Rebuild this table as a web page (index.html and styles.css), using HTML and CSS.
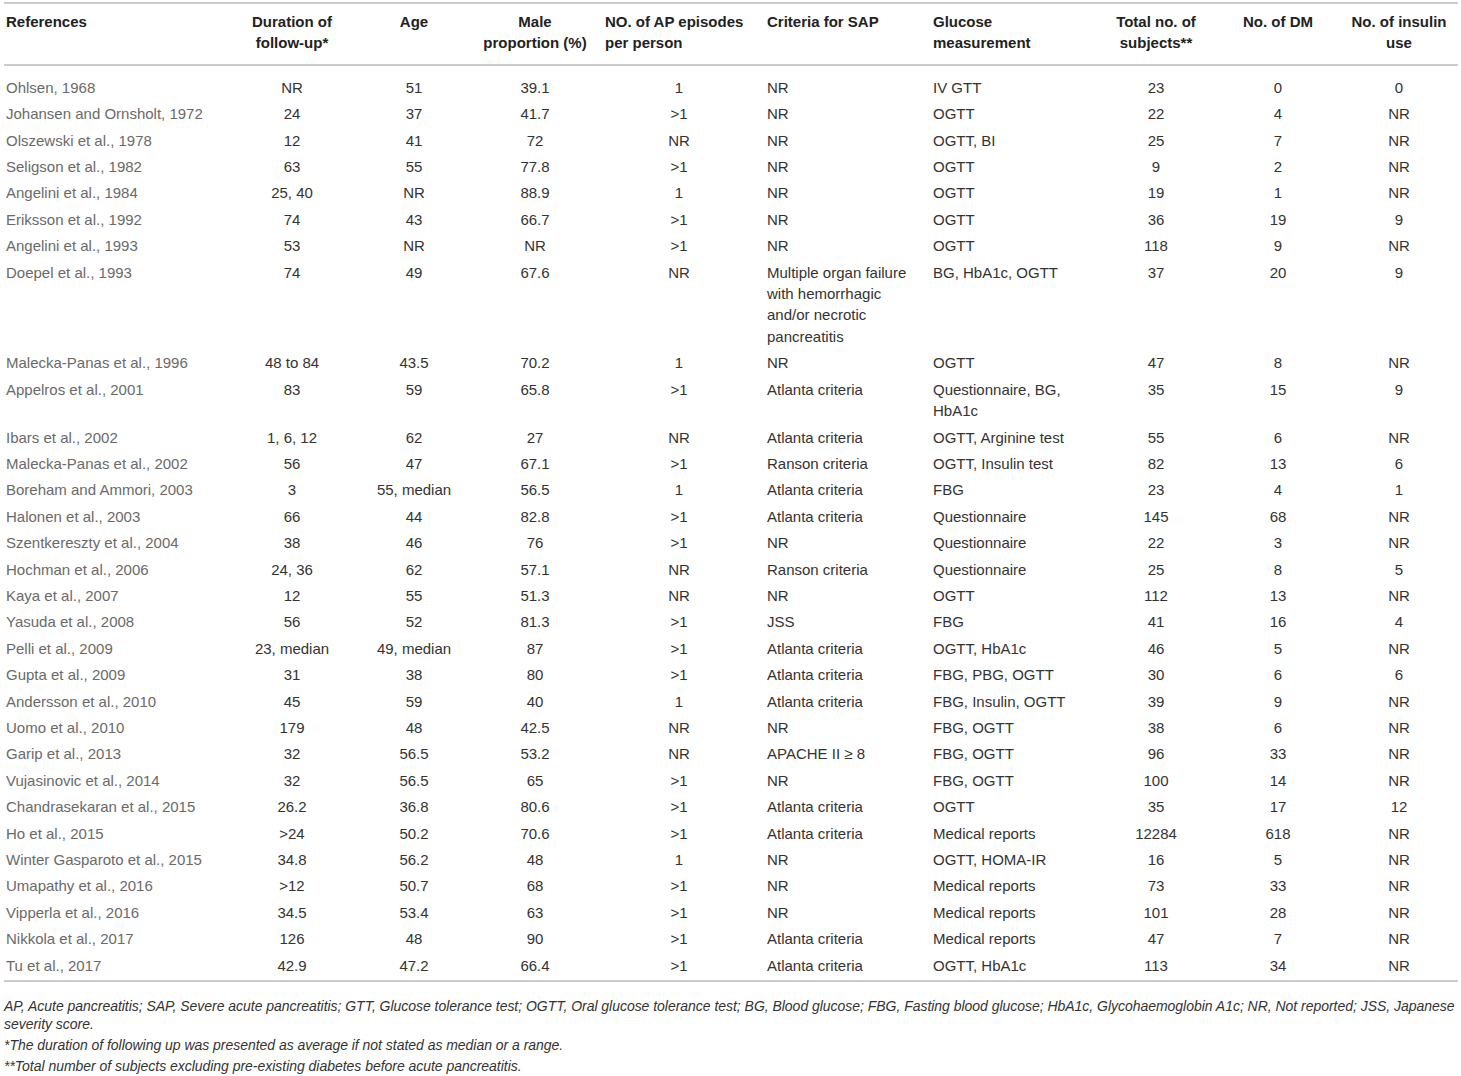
FILE: index.html
```html
<!DOCTYPE html>
<html lang="en">
<head>
    <meta charset="UTF-8">
    <title>Acute pancreatitis and diabetes - included studies</title>
    <link rel="stylesheet" href="styles.css">
</head>
<body>
    <table class="studies">
        <colgroup>
            <col class="c-ref">
            <col class="c-dur">
            <col class="c-age">
            <col class="c-male">
            <col class="c-ap">
            <col class="c-crit">
            <col class="c-gluc">
            <col class="c-total">
            <col class="c-dm">
            <col class="c-ins">
        </colgroup>
        <thead>
            <tr>
                <th class="left ref">References</th>
                <th>Duration of<br>follow-up*</th>
                <th>Age</th>
                <th>Male<br>proportion (%)</th>
                <th class="left">NO. of AP episodes<br>per person</th>
                <th class="left">Criteria for SAP</th>
                <th class="left">Glucose<br>measurement</th>
                <th>Total no. of<br>subjects**</th>
                <th>No. of DM</th>
                <th>No. of insulin<br>use</th>
            </tr>
        </thead>
        <tbody>
            <tr><td class="ref">Ohlsen, 1968</td><td>NR</td><td>51</td><td>39.1</td><td>1</td><td class="left">NR</td><td class="left">IV GTT</td><td>23</td><td>0</td><td>0</td></tr>
            <tr><td class="ref">Johansen and Ornsholt, 1972</td><td>24</td><td>37</td><td>41.7</td><td>&gt;1</td><td class="left">NR</td><td class="left">OGTT</td><td>22</td><td>4</td><td>NR</td></tr>
            <tr><td class="ref">Olszewski et al., 1978</td><td>12</td><td>41</td><td>72</td><td>NR</td><td class="left">NR</td><td class="left">OGTT, BI</td><td>25</td><td>7</td><td>NR</td></tr>
            <tr><td class="ref">Seligson et al., 1982</td><td>63</td><td>55</td><td>77.8</td><td>&gt;1</td><td class="left">NR</td><td class="left">OGTT</td><td>9</td><td>2</td><td>NR</td></tr>
            <tr><td class="ref">Angelini et al., 1984</td><td>25, 40</td><td>NR</td><td>88.9</td><td>1</td><td class="left">NR</td><td class="left">OGTT</td><td>19</td><td>1</td><td>NR</td></tr>
            <tr><td class="ref">Eriksson et al., 1992</td><td>74</td><td>43</td><td>66.7</td><td>&gt;1</td><td class="left">NR</td><td class="left">OGTT</td><td>36</td><td>19</td><td>9</td></tr>
            <tr><td class="ref">Angelini et al., 1993</td><td>53</td><td>NR</td><td>NR</td><td>&gt;1</td><td class="left">NR</td><td class="left">OGTT</td><td>118</td><td>9</td><td>NR</td></tr>
            <tr><td class="ref">Doepel et al., 1993</td><td>74</td><td>49</td><td>67.6</td><td>NR</td><td class="left">Multiple organ failure<br>with hemorrhagic<br>and/or necrotic<br>pancreatitis</td><td class="left">BG, HbA1c, OGTT</td><td>37</td><td>20</td><td>9</td></tr>
            <tr><td class="ref">Malecka-Panas et al., 1996</td><td>48 to 84</td><td>43.5</td><td>70.2</td><td>1</td><td class="left">NR</td><td class="left">OGTT</td><td>47</td><td>8</td><td>NR</td></tr>
            <tr><td class="ref">Appelros et al., 2001</td><td>83</td><td>59</td><td>65.8</td><td>&gt;1</td><td class="left">Atlanta criteria</td><td class="left">Questionnaire, BG,<br>HbA1c</td><td>35</td><td>15</td><td>9</td></tr>
            <tr><td class="ref">Ibars et al., 2002</td><td>1, 6, 12</td><td>62</td><td>27</td><td>NR</td><td class="left">Atlanta criteria</td><td class="left">OGTT, Arginine test</td><td>55</td><td>6</td><td>NR</td></tr>
            <tr><td class="ref">Malecka-Panas et al., 2002</td><td>56</td><td>47</td><td>67.1</td><td>&gt;1</td><td class="left">Ranson criteria</td><td class="left">OGTT, Insulin test</td><td>82</td><td>13</td><td>6</td></tr>
            <tr><td class="ref">Boreham and Ammori, 2003</td><td>3</td><td>55, median</td><td>56.5</td><td>1</td><td class="left">Atlanta criteria</td><td class="left">FBG</td><td>23</td><td>4</td><td>1</td></tr>
            <tr><td class="ref">Halonen et al., 2003</td><td>66</td><td>44</td><td>82.8</td><td>&gt;1</td><td class="left">Atlanta criteria</td><td class="left">Questionnaire</td><td>145</td><td>68</td><td>NR</td></tr>
            <tr><td class="ref">Szentkereszty et al., 2004</td><td>38</td><td>46</td><td>76</td><td>&gt;1</td><td class="left">NR</td><td class="left">Questionnaire</td><td>22</td><td>3</td><td>NR</td></tr>
            <tr><td class="ref">Hochman et al., 2006</td><td>24, 36</td><td>62</td><td>57.1</td><td>NR</td><td class="left">Ranson criteria</td><td class="left">Questionnaire</td><td>25</td><td>8</td><td>5</td></tr>
            <tr><td class="ref">Kaya et al., 2007</td><td>12</td><td>55</td><td>51.3</td><td>NR</td><td class="left">NR</td><td class="left">OGTT</td><td>112</td><td>13</td><td>NR</td></tr>
            <tr><td class="ref">Yasuda et al., 2008</td><td>56</td><td>52</td><td>81.3</td><td>&gt;1</td><td class="left">JSS</td><td class="left">FBG</td><td>41</td><td>16</td><td>4</td></tr>
            <tr><td class="ref">Pelli et al., 2009</td><td>23, median</td><td>49, median</td><td>87</td><td>&gt;1</td><td class="left">Atlanta criteria</td><td class="left">OGTT, HbA1c</td><td>46</td><td>5</td><td>NR</td></tr>
            <tr><td class="ref">Gupta et al., 2009</td><td>31</td><td>38</td><td>80</td><td>&gt;1</td><td class="left">Atlanta criteria</td><td class="left">FBG, PBG, OGTT</td><td>30</td><td>6</td><td>6</td></tr>
            <tr><td class="ref">Andersson et al., 2010</td><td>45</td><td>59</td><td>40</td><td>1</td><td class="left">Atlanta criteria</td><td class="left">FBG, Insulin, OGTT</td><td>39</td><td>9</td><td>NR</td></tr>
            <tr><td class="ref">Uomo et al., 2010</td><td>179</td><td>48</td><td>42.5</td><td>NR</td><td class="left">NR</td><td class="left">FBG, OGTT</td><td>38</td><td>6</td><td>NR</td></tr>
            <tr><td class="ref">Garip et al., 2013</td><td>32</td><td>56.5</td><td>53.2</td><td>NR</td><td class="left">APACHE II &ge; 8</td><td class="left">FBG, OGTT</td><td>96</td><td>33</td><td>NR</td></tr>
            <tr><td class="ref">Vujasinovic et al., 2014</td><td>32</td><td>56.5</td><td>65</td><td>&gt;1</td><td class="left">NR</td><td class="left">FBG, OGTT</td><td>100</td><td>14</td><td>NR</td></tr>
            <tr><td class="ref">Chandrasekaran et al., 2015</td><td>26.2</td><td>36.8</td><td>80.6</td><td>&gt;1</td><td class="left">Atlanta criteria</td><td class="left">OGTT</td><td>35</td><td>17</td><td>12</td></tr>
            <tr><td class="ref">Ho et al., 2015</td><td>&gt;24</td><td>50.2</td><td>70.6</td><td>&gt;1</td><td class="left">Atlanta criteria</td><td class="left">Medical reports</td><td>12284</td><td>618</td><td>NR</td></tr>
            <tr><td class="ref">Winter Gasparoto et al., 2015</td><td>34.8</td><td>56.2</td><td>48</td><td>1</td><td class="left">NR</td><td class="left">OGTT, HOMA-IR</td><td>16</td><td>5</td><td>NR</td></tr>
            <tr><td class="ref">Umapathy et al., 2016</td><td>&gt;12</td><td>50.7</td><td>68</td><td>&gt;1</td><td class="left">NR</td><td class="left">Medical reports</td><td>73</td><td>33</td><td>NR</td></tr>
            <tr><td class="ref">Vipperla et al., 2016</td><td>34.5</td><td>53.4</td><td>63</td><td>&gt;1</td><td class="left">NR</td><td class="left">Medical reports</td><td>101</td><td>28</td><td>NR</td></tr>
            <tr><td class="ref">Nikkola et al., 2017</td><td>126</td><td>48</td><td>90</td><td>&gt;1</td><td class="left">Atlanta criteria</td><td class="left">Medical reports</td><td>47</td><td>7</td><td>NR</td></tr>
            <tr><td class="ref">Tu et al., 2017</td><td>42.9</td><td>47.2</td><td>66.4</td><td>&gt;1</td><td class="left">Atlanta criteria</td><td class="left">OGTT, HbA1c</td><td>113</td><td>34</td><td>NR</td></tr>
        </tbody>
    </table>

    <div class="notes">
        <p>AP, Acute pancreatitis; SAP, Severe acute pancreatitis; GTT, Glucose tolerance test; OGTT, Oral glucose tolerance test; BG, Blood glucose; FBG, Fasting blood glucose; HbA1c, Glycohaemoglobin A1c; NR, Not reported; JSS, Japanese<br>severity score.</p>
        <p>*The duration of following up was presented as average if not stated as median or a range.</p>
        <p>**Total number of subjects excluding pre-existing diabetes before acute pancreatitis.</p>
    </div>
</body>
</html>
```

FILE: styles.css
```css
body {
    margin: 0;
    padding: 0 4px;
    background-color: #fff;
    font-family: "Liberation Sans", Arial, sans-serif;
    color: #333;
}

.studies {
    width: 1454px;
    border-collapse: collapse;
    table-layout: fixed;
    margin-top: 2px;
    font-size: 15px;
    line-height: 21.4px;
}

.c-ref { width: 224px; }
.c-dur { width: 128px; }
.c-age { width: 116px; }
.c-male { width: 126px; }
.c-ap { width: 162px; }
.c-crit { width: 166px; }
.c-gluc { width: 170px; }
.c-total { width: 120px; }
.c-dm { width: 124px; }
.c-ins { width: 118px; }

.studies th,
.studies td {
    vertical-align: top;
    text-align: center;
    padding: 2.5px 7px;
}

.studies thead tr {
    border-top: 2px solid #cbcbcb;
    border-bottom: 2px solid #cbcbcb;
}

.studies th {
    font-weight: bold;
    color: #222;
    padding-top: 7px;
    padding-bottom: 10.5px;
}

.studies tbody tr:first-child td {
    padding-top: 10.5px;
}

.studies tbody tr:last-child {
    border-bottom: 2px solid #cbcbcb;
}

.studies tbody tr:last-child td {
    padding-bottom: 4px;
}

.studies .left {
    text-align: left;
}

.studies .ref {
    text-align: left;
    padding-left: 2px;
}

.studies td.ref {
    color: #6a6a6a;
}

.notes {
    margin-top: 15px;
    font-size: 14px;
    font-style: italic;
    letter-spacing: -0.03px;
    color: #333;
}

.notes p {
    margin: 0 0 3px;
    line-height: 18px;
    white-space: nowrap;
}
```
